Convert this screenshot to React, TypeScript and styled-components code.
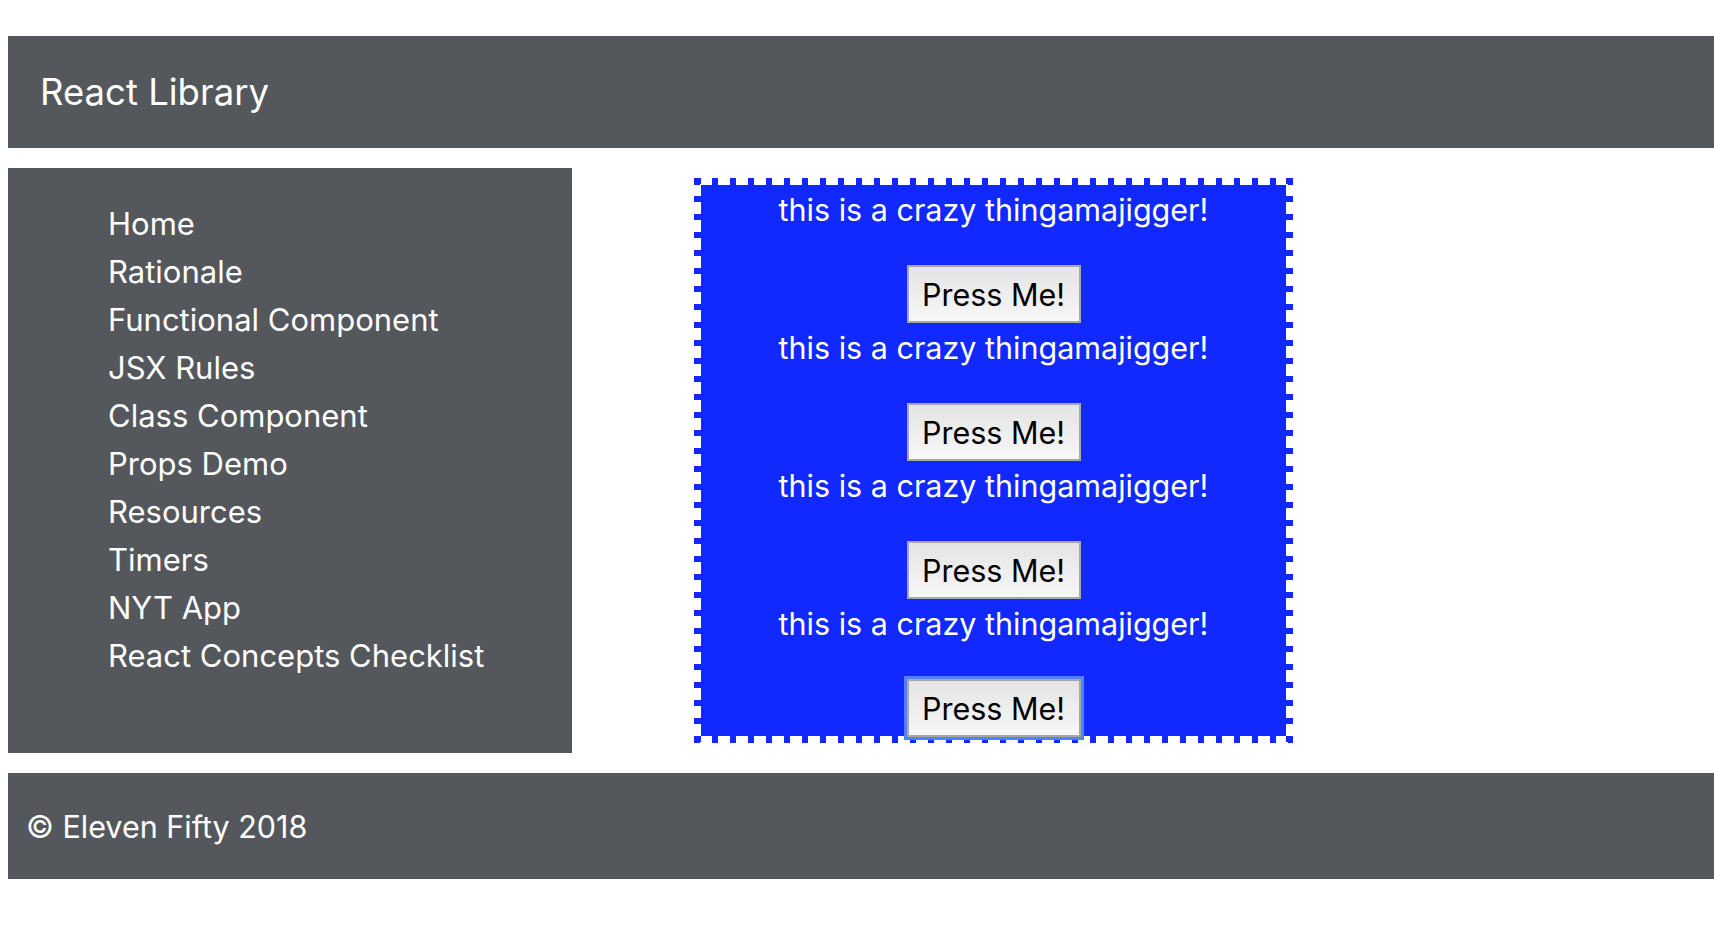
import { FC } from 'react';
import styled, { createGlobalStyle } from 'styled-components';

const GlobalStyle = createGlobalStyle`
  html, body {
    margin: 0;
    padding: 0;
    background: #ffffff;
    overflow-x: hidden;
  }
  body {
    font-family: Inter, "Noto Sans", "Liberation Sans", sans-serif;
  }
`;

const Page = styled.div`
  padding: 36px 0 0 8px;
`;

const Header = styled.header`
  display: flex;
  align-items: center;
  height: 112px;
  padding-left: 32px;
  background: #54575c;
`;

const Title = styled.h1`
  margin: 0;
  color: #ffffff;
  font-size: 36.5px;
  font-weight: 400;
`;

const Main = styled.main`
  display: flex;
  align-items: flex-start;
  margin-top: 20px;
`;

const Sidebar = styled.nav`
  box-sizing: border-box;
  width: 564px;
  height: 585px;
  padding-top: 32px;
  background: #54575c;
`;

const NavList = styled.ul`
  margin: 0;
  padding: 0 0 0 100px;
  list-style: none;
`;

const NavItem = styled.li`
  height: 48px;
  line-height: 48px;
  font-size: 31px;
  color: #ffffff;
`;

const blue = '#1128ff';

const Thingamajig = styled.section`
  box-sizing: border-box;
  width: 599px;
  height: 565px;
  margin: 10px 0 0 122px;
  padding-top: 8px;
  border: 7px solid transparent;
  background:
    linear-gradient(${blue}, ${blue}) padding-box,
    repeating-linear-gradient(90deg, ${blue} 0 6px, transparent 6px 18px) left top / 100% 7px no-repeat border-box,
    repeating-linear-gradient(90deg, ${blue} 0 6px, transparent 6px 18px) left bottom / 100% 7px no-repeat border-box,
    repeating-linear-gradient(180deg, ${blue} 0 6px, transparent 6px 18px) left top / 7px 100% no-repeat border-box,
    repeating-linear-gradient(180deg, ${blue} 0 6px, transparent 6px 18px) right top / 7px 100% no-repeat border-box;
  display: flex;
  flex-direction: column;
  align-items: center;

  & > * {
    flex-shrink: 0;
  }
`;

const Crazy = styled.p`
  margin: 0;
  height: 34px;
  line-height: 34px;
  font-size: 30.5px;
  color: #ffffff;
`;

const PressButton = styled.button<{ $focused?: boolean }>`
  box-sizing: border-box;
  width: 174px;
  height: 58px;
  margin: 38px 0 8px;
  padding: 0;
  border: 2px solid #a8a8a8;
  background: linear-gradient(#e4e4e4, #f7f7f7);
  color: #000000;
  font-family: inherit;
  font-size: 30.5px;
  box-shadow: ${({ $focused }) => ($focused ? '0 0 0 3px #4f82f4' : 'none')};
`;

const Footer = styled.footer`
  display: flex;
  align-items: center;
  height: 106px;
  margin-top: 20px;
  padding-left: 18px;
  background: #54575c;
  color: #ffffff;
  font-size: 30.5px;
`;

const links = [
  'Home',
  'Rationale',
  'Functional Component',
  'JSX Rules',
  'Class Component',
  'Props Demo',
  'Resources',
  'Timers',
  'NYT App',
  'React Concepts Checklist',
];

const Thing: FC<{ focused?: boolean }> = ({ focused }) => (
  <>
    <Crazy>this is a crazy thingamajigger!</Crazy>
    <PressButton $focused={focused}>Press Me!</PressButton>
  </>
);

const App: FC = () => (
  <Page>
    <GlobalStyle />
    <Header>
      <Title>React Library</Title>
    </Header>
    <Main>
      <Sidebar>
        <NavList>
          {links.map((link) => (
            <NavItem key={link}>{link}</NavItem>
          ))}
        </NavList>
      </Sidebar>
      <Thingamajig>
        <Thing />
        <Thing />
        <Thing />
        <Thing focused />
      </Thingamajig>
    </Main>
    <Footer>© Eleven Fifty 2018</Footer>
  </Page>
);

export default App;
